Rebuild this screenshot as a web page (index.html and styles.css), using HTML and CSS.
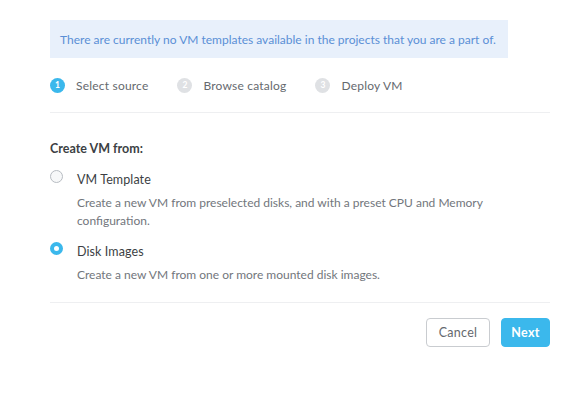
FILE: index.html
```html
<!DOCTYPE html>
<html>
<head>
<meta charset="utf-8">
<link rel="stylesheet" href="styles.css">
</head>
<body>
<div class="wizard">
  <div class="banner">There are currently no VM templates available in the projects that you are a part of.</div>
  <div class="steps">
    <div class="step active"><span class="num">1</span><span class="label">Select source</span></div>
    <div class="step"><span class="num">2</span><span class="label">Browse catalog</span></div>
    <div class="step"><span class="num">3</span><span class="label">Deploy VM</span></div>
  </div>
  <div class="body">
    <div class="heading">Create VM from:</div>
    <div class="option">
      <span class="radio"></span>
      <div class="opt-text">
        <div class="opt-title">VM Template</div>
        <div class="opt-desc">Create a new VM from preselected disks, and with a preset CPU and Memory configuration.</div>
      </div>
    </div>
    <div class="option">
      <span class="radio checked"></span>
      <div class="opt-text">
        <div class="opt-title">Disk Images</div>
        <div class="opt-desc">Create a new VM from one or more mounted disk images.</div>
      </div>
    </div>
  </div>
  <div class="footer">
    <button class="btn btn-default">Cancel</button>
    <button class="btn btn-primary">Next</button>
  </div>
</div>
</body>
</html>
```
FILE: styles.css
```css
html, body { margin: 0; padding: 0; background: #fff; }
body { font-family: "Lato", "Open Sans", sans-serif; font-size: 12px; color: #65696e; }
.wizard { width: 500px; padding: 20px 0 0 50px; }
.banner {
  width: 458px; height: 38px; box-sizing: border-box;
  background: #e8f0fb; color: #5a8fd6;
  padding: 0 10px; display: flex; align-items: center;
  font-size: 12px; white-space: nowrap;
}
.steps {
  display: flex; align-items: center; height: 55px; box-sizing: border-box;
  border-bottom: 1px solid #eeeff1;
}
.step { display: flex; align-items: center; margin-right: 29px; }
.num {
  width: 15px; height: 15px; border-radius: 50%; background: #dfe1e4; color: #fff;
  font-size: 8.5px; font-weight: 700; display: flex; align-items: center; justify-content: center;
  margin-right: 11px;
}
.step.active .num { background: #3bb8ec; }
.label { font-size: 12px; color: #65696e; letter-spacing: 0.2px; }
.body { padding: 28px 0 18px; border-bottom: 1px solid #eeeff1; }
.heading { font-size: 12.5px; font-weight: 700; color: #3c3f44; line-height: 16px; margin-bottom: 14px; }
.option { display: flex; align-items: flex-start; margin-bottom: 13px; }
.option:last-child { margin-bottom: 0; }
.radio {
  width: 13px; height: 13px; box-sizing: border-box; border-radius: 50%;
  border: 1px solid #b7bcc2; background: #f7f8f9; margin-top: -1px; margin-right: 14px; flex: none;
}
.radio.checked { border: 4px solid #3bb8ec; background: #fff; }
.opt-title { font-size: 12.5px; color: #3c3f44; line-height: 16px; margin-top: 1px; margin-bottom: 6px; letter-spacing: 0.1px; }
.opt-desc { font-size: 12px; color: #72767c; line-height: 18px; width: 420px; }
.footer { display: flex; justify-content: flex-end; gap: 11px; padding-top: 15px; }
.btn {
  height: 29px; box-sizing: border-box; border-radius: 4px; font-family: inherit;
  font-size: 12.5px; letter-spacing: 0.3px; cursor: pointer; padding: 0;
}
.btn-default { width: 64px; border: 1px solid #c9ccd0; background: #fff; color: #65696e; }
.btn-primary { width: 49px; border: 1px solid #3bb8ec; background: #3bb8ec; color: #fff; font-weight: 700; }
```
